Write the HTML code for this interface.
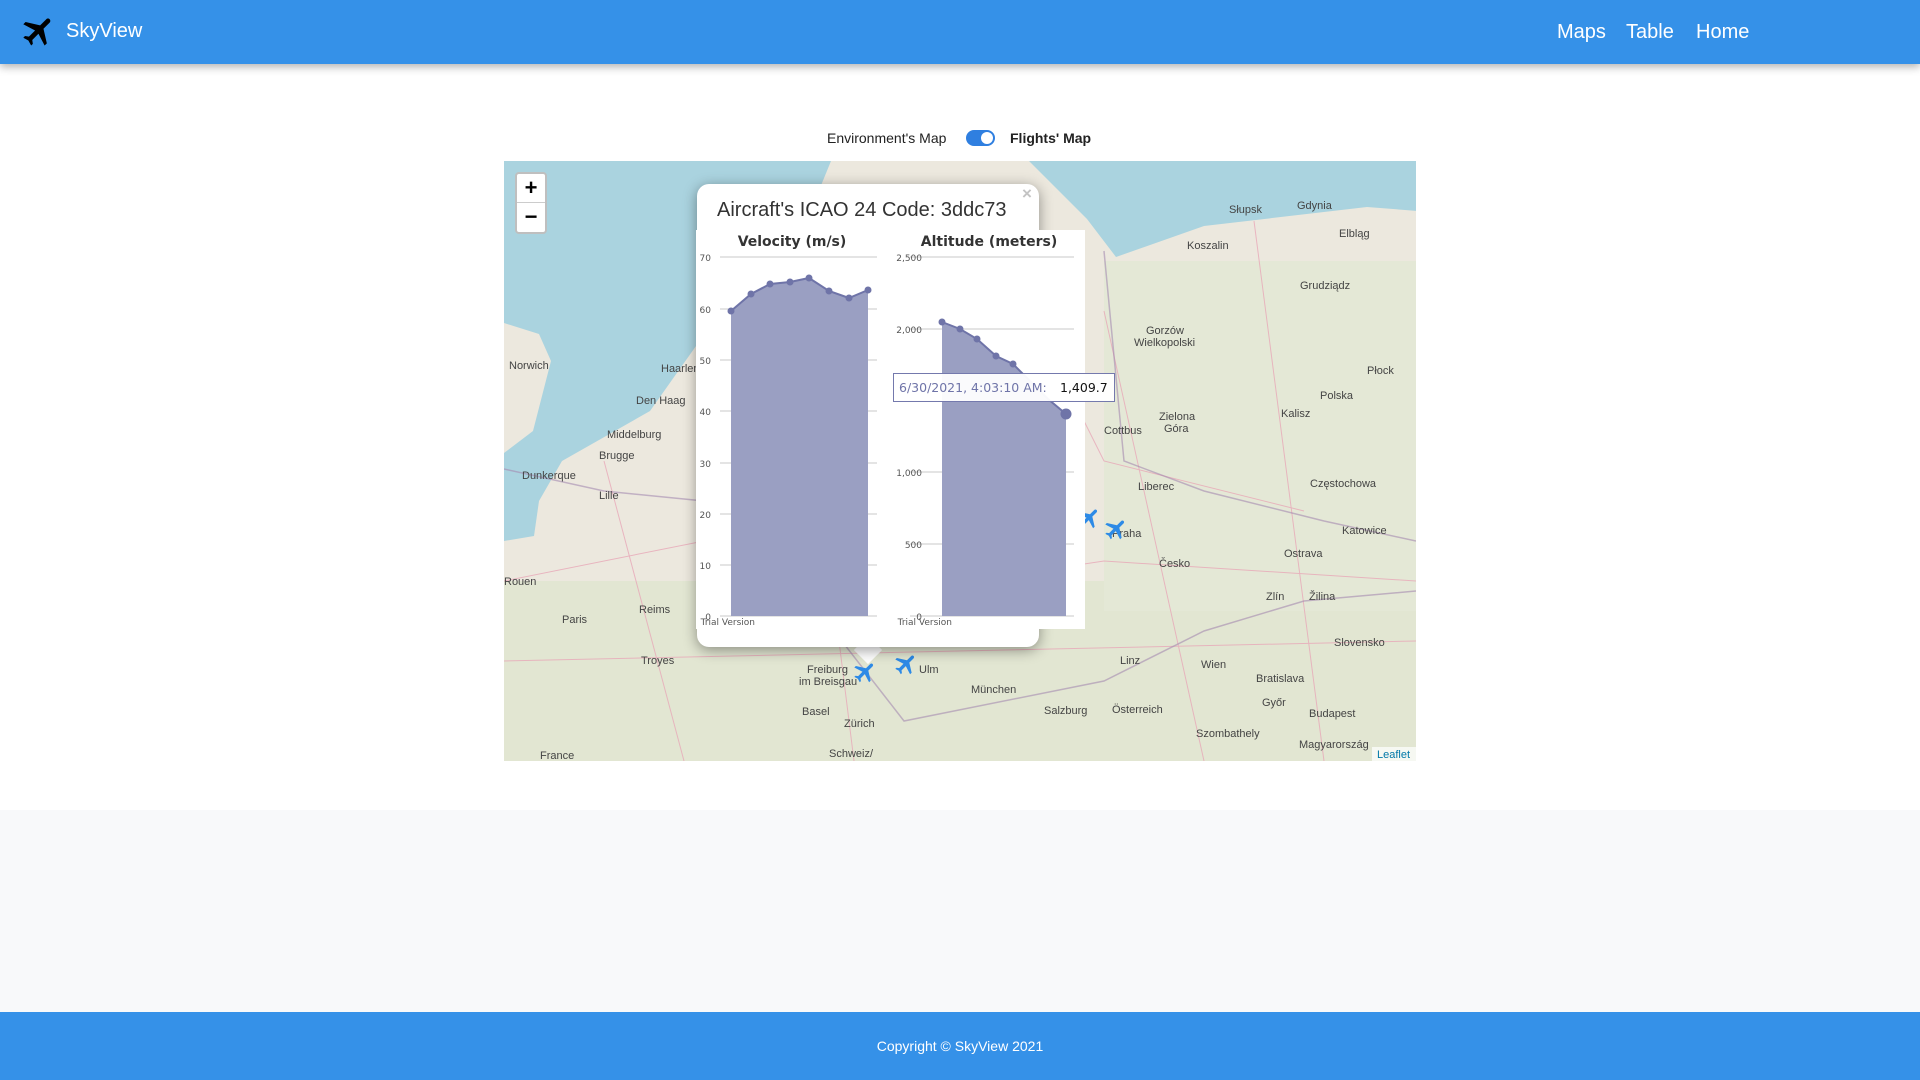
<!DOCTYPE html>
<html><head><meta charset="utf-8"><style>
*{margin:0;padding:0;box-sizing:border-box}
body{width:1920px;height:1080px;position:relative;background:#fff;font-family:"Liberation Sans",sans-serif;overflow:hidden}
.hdr{position:absolute;left:0;top:0;width:1920px;height:64px;background:#3591e8;box-shadow:0 3px 8px rgba(0,0,0,.3);z-index:5}
.brand{position:absolute;left:66px;top:20px;color:#fff;font-size:20px}
.nav{position:absolute;top:21px;color:#fff;font-size:20px}
.tog{position:absolute;top:130px;font-size:14px;color:#222}
.gray{position:absolute;left:0;top:810px;width:1920px;height:202px;background:#f8f9fa}
.ftr{position:absolute;left:0;top:1012px;width:1920px;height:68px;background:#3591e8;color:#fff;font-size:14px;text-align:center;line-height:68px}
.map{position:absolute;left:504px;top:161px;width:912px;height:600px;overflow:hidden;background:#eae6dc}
.lbl text{font-family:"Liberation Sans",sans-serif;font-size:11px;fill:#444}
.zoomc{position:absolute;left:515px;top:172px;width:32px;height:62px;border:2px solid rgba(0,0,0,.25);border-radius:4px;background:#fff}
.zoomc div{height:29px;text-align:center;font-size:22px;font-weight:bold;line-height:28px;color:#000}
.popup{position:absolute;left:697px;top:184px;width:342px;height:463px;background:#fff;border-radius:12px;box-shadow:0 3px 14px rgba(0,0,0,.4)}
.tip{position:absolute;left:858px;top:640px;width:20px;height:20px;background:#fff;transform:rotate(45deg)}
.ptitle{position:absolute;left:717px;top:199px;font-size:20px;color:#333}
.close{position:absolute;left:1022px;top:184px;font-size:17px;color:#c3c3c3;font-weight:bold}
.charts{position:absolute;left:696px;top:230px;width:389px;height:399px;background:#fff}
</style></head><body>
<div class="hdr">
<svg style="position:absolute;left:20px;top:12px" width="38" height="38" viewBox="0 0 24 24"><path transform="rotate(45 12 12)" d="M21 16v-2l-8-5V3.5c0-.83-.67-1.5-1.5-1.5S10 2.67 10 3.5V9l-8 5v2l8-2.5V19l-2 1.5V22l3.5-1 3.5 1v-1.5L13 19v-5.5l8 2.5z" fill="#000"/></svg>
<div class="brand">SkyView</div>
<div class="nav" style="left:1557px">Maps</div>
<div class="nav" style="left:1626px">Table</div>
<div class="nav" style="left:1696px">Home</div>
</div>
<div class="tog" style="left:827px">Environment's Map</div>
<div style="position:absolute;left:966px;top:130px;width:29px;height:16px;border-radius:8px;background:#2f7fe0"><div style="position:absolute;left:15px;top:2px;width:12px;height:12px;border-radius:6px;background:#fff"></div></div>
<div class="tog" style="left:1010px;font-weight:bold">Flights' Map</div>

<div class="map">
<svg width="912" height="600" viewBox="0 0 912 600">
<rect width="912" height="600" fill="#ece8de"/>
<rect x="0" y="420" width="912" height="180" fill="#e2e6d2"/>
<rect x="600" y="100" width="312" height="350" fill="#e4e8d6"/>
<polygon points="0,0 327,0 280,115 192,185 146,250 58,300 35,340 30,375 0,380 0,292 29,270 47,200 35,173 0,162" fill="#aad3df"/>
<polygon points="525,0 583,58 612,96 700,65 863,46 914,50 914,0" fill="#aad3df"/>
<g stroke="#e8a8b8" stroke-width="1" fill="none" opacity=".8">
<path d="M0,420 L200,380 L400,430 L600,400 L912,420"/><path d="M100,300 L180,600"/><path d="M300,200 L350,600"/><path d="M600,150 L700,600"/><path d="M750,60 L820,600"/><path d="M0,500 L912,480"/><path d="M500,100 L600,300 L800,350"/>
</g>
<g stroke="#a58ab0" stroke-width="1.5" fill="none" opacity=".6"><path d="M0,308 L100,330 L200,340 L260,400 L330,470 L400,560 L600,520 L700,470 L800,440 L912,430"/><path d="M600,90 L620,300 L700,330 L820,360 L912,380"/></g>
<g class="lbl">
<text x="5" y="208">Norwich</text><text x="157" y="211">Haarlem</text><text x="132" y="243" font-size="12">Den Haag</text><text x="103" y="277">Middelburg</text><text x="95" y="298">Brugge</text><text x="18" y="318">Dunkerque</text><text x="95" y="338" font-size="12">Lille</text><text x="0" y="424">Rouen</text><text x="58" y="462" font-size="12">Paris</text><text x="135" y="452">Reims</text><text x="137" y="503">Troyes</text><text x="36" y="598" font-size="12">France</text><text x="303" y="512">Freiburg</text><text x="295" y="524">im Breisgau</text><text x="298" y="554">Basel</text><text x="340" y="566">Zürich</text><text x="325" y="596" font-size="12">Schweiz/</text><text x="467" y="532" font-size="12">München</text><text x="415" y="512">Ulm</text><text x="540" y="553">Salzburg</text><text x="608" y="552" font-size="12">Österreich</text><text x="697" y="507" font-size="12">Wien</text><text x="752" y="521" font-size="12">Bratislava</text><text x="805" y="556" font-size="12">Budapest</text><text x="830" y="485" font-size="12">Slovensko</text><text x="655" y="406" font-size="12">Česko</text><text x="608" y="376">Praha</text><text x="634" y="329">Liberec</text><text x="838" y="373">Katowice</text><text x="780" y="396">Ostrava</text><text x="816" y="238" font-size="12">Polska</text><text x="683" y="88">Koszalin</text><text x="725" y="52">Słupsk</text><text x="793" y="48">Gdynia</text><text x="835" y="76">Elbląg</text><text x="796" y="128">Grudziądz</text><text x="642" y="173">Gorzów</text><text x="630" y="185">Wielkopolski</text><text x="863" y="213">Płock</text><text x="777" y="256">Kalisz</text><text x="655" y="259">Zielona</text><text x="660" y="271">Góra</text><text x="600" y="273">Cottbus</text><text x="806" y="326">Częstochowa</text><text x="762" y="439">Zlín</text><text x="805" y="439">Žilina</text><text x="616" y="503">Linz</text><text x="758" y="545">Győr</text><text x="692" y="576">Szombathely</text><text x="795" y="587" font-size="12">Magyarország</text>
</g>
<rect x="868" y="586" width="44" height="14" fill="rgba(255,255,255,.7)"/><text x="873" y="597" font-family="Liberation Sans" font-size="11" fill="#0078a8">Leaflet</text>
</svg>
</div>
<svg style="position:absolute;left:0;top:0" width="1920" height="1080" pointer-events="none">
<g fill="#2d8ae6">
<path transform="translate(852,659) scale(1.1) rotate(45 12 12)" d="M21 16v-2l-8-5V3.5c0-.83-.67-1.5-1.5-1.5S10 2.67 10 3.5V9l-8 5v2l8-2.5V19l-2 1.5V22l3.5-1 3.5 1v-1.5L13 19v-5.5l8 2.5z"/>
<path transform="translate(893,651) scale(1.1) rotate(45 12 12)" d="M21 16v-2l-8-5V3.5c0-.83-.67-1.5-1.5-1.5S10 2.67 10 3.5V9l-8 5v2l8-2.5V19l-2 1.5V22l3.5-1 3.5 1v-1.5L13 19v-5.5l8 2.5z"/>
<path transform="translate(1076,505) scale(1.1) rotate(45 12 12)" d="M21 16v-2l-8-5V3.5c0-.83-.67-1.5-1.5-1.5S10 2.67 10 3.5V9l-8 5v2l8-2.5V19l-2 1.5V22l3.5-1 3.5 1v-1.5L13 19v-5.5l8 2.5z"/>
<path transform="translate(1103,516) scale(1.1) rotate(45 12 12)" d="M21 16v-2l-8-5V3.5c0-.83-.67-1.5-1.5-1.5S10 2.67 10 3.5V9l-8 5v2l8-2.5V19l-2 1.5V22l3.5-1 3.5 1v-1.5L13 19v-5.5l8 2.5z"/>
</g></svg>
<div class="zoomc"><div style="border-bottom:1px solid #ccc">+</div><div>−</div></div>
<div class="tip"></div>
<div class="popup"></div>
<div class="charts"></div>
<div class="ptitle">Aircraft's ICAO 24 Code: 3ddc73</div>
<div class="close">×</div>
<svg style="position:absolute;left:0;top:0" width="1920" height="1080">
<g font-family="DejaVu Sans,sans-serif" font-size="14" font-weight="bold" fill="#333" text-anchor="middle"><text x="792" y="246">Velocity (m/s)</text><text x="989" y="246">Altitude (meters)</text></g>
<g stroke="#c8c8c8" stroke-width="1">
<path d="M720 257H877M720 309H877M720 360H877M720 411H877M720 463H877M720 514H877M720 565H877M720 616H877"/>
<path d="M910 257H1074M910 329H1074M910 401H1074M910 472H1074M910 544H1074M910 616H1074"/>
</g>
<g font-family="DejaVu Sans,sans-serif" font-size="9" fill="#555" text-anchor="end">
<text x="711" y="261">70</text><text x="711" y="313">60</text><text x="711" y="364">50</text><text x="711" y="415">40</text><text x="711" y="467">30</text><text x="711" y="518">20</text><text x="711" y="569">10</text><text x="711" y="620">0</text>
<text x="922" y="261">2,500</text><text x="922" y="333">2,000</text><text x="922" y="476">1,000</text><text x="922" y="548">500</text><text x="922" y="620">0</text>
<text x="755" y="625">Trial Version</text><text x="952" y="625">Trial Version</text>
</g>
<path d="M731,311 L751,294 L770,284 L790,282 L809,278 L829,291 L849,298 L868,290 L868,616 L731,616Z" fill="#9a9fc2"/>
<polyline points="731,311 751,294 770,284 790,282 809,278 829,291 849,298 868,290" fill="none" stroke="#6f74a8" stroke-width="2"/>
<g fill="#6f74a8"><circle cx="731" cy="311" r="3.5"/><circle cx="751" cy="294" r="3.5"/><circle cx="770" cy="284" r="3.5"/><circle cx="790" cy="282" r="3.5"/><circle cx="809" cy="278" r="3.5"/><circle cx="829" cy="291" r="3.5"/><circle cx="849" cy="298" r="3.5"/><circle cx="868" cy="290" r="3.5"/></g>
<path d="M942,322 L960,329 L977,339 L996,356 L1013,364 L1031,382 L1048,399 L1066,414 L1066,616 L942,616Z" fill="#9a9fc2"/>
<polyline points="942,322 960,329 977,339 996,356 1013,364 1031,382 1048,399 1066,414" fill="none" stroke="#6f74a8" stroke-width="2"/>
<g fill="#6f74a8"><circle cx="942" cy="322" r="3.5"/><circle cx="960" cy="329" r="3.5"/><circle cx="977" cy="339" r="3.5"/><circle cx="996" cy="356" r="3.5"/><circle cx="1013" cy="364" r="3.5"/><circle cx="1066" cy="414" r="5.5"/></g>
<rect x="893.5" y="373.5" width="221" height="28" fill="rgba(255,255,255,.95)" stroke="#7479ad"/>
<text x="899" y="392" font-family="DejaVu Sans,sans-serif" font-size="12.5" fill="#6f74a8">6/30/2021, 4:03:10 AM:</text>
<text x="1060" y="392" font-family="DejaVu Sans,sans-serif" font-size="12.5" fill="#111">1,409.7</text>
</svg>
<div class="gray"></div>
<div class="ftr">Copyright © SkyView 2021</div>
</body></html>
